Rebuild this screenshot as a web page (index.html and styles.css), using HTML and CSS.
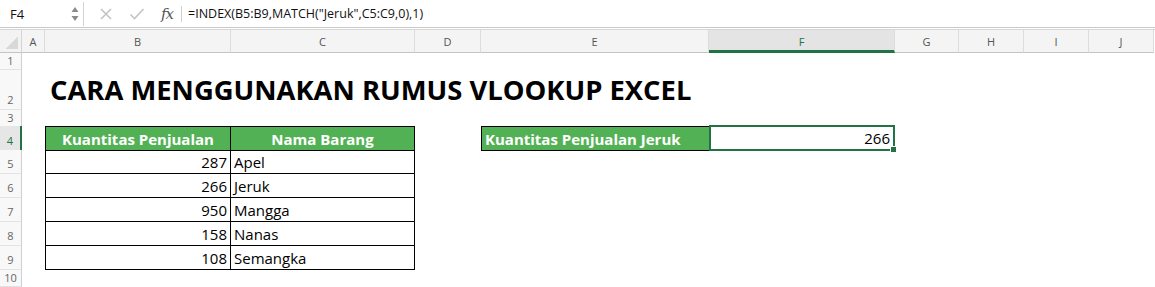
FILE: index.html
```html
<!DOCTYPE html>
<html lang="id">
<head>
    <meta charset="UTF-8">
    <title>Cara Menggunakan Rumus VLOOKUP Excel</title>
    <link rel="stylesheet" href="styles.css">
</head>
<body>
    <div class="formula-bar">
        <div class="name-box">
            <span class="cell-ref">F4</span>
            <span class="spin">
                <svg width="8" height="16" viewBox="0 0 8 16"><path d="M4 1 L7.5 6 H0.5 Z M4 15 L7.5 10 H0.5 Z" fill="#8a8a8a"/></svg>
            </span>
        </div>
        <div class="fb-tools">
            <svg class="tool" width="14" height="14" viewBox="0 0 14 14"><path d="M2 2 L12 12 M12 2 L2 12" stroke="#c4c4c4" stroke-width="1.6" fill="none"/></svg>
            <svg class="tool" width="16" height="14" viewBox="0 0 16 14"><path d="M1.5 7.5 L5.5 11.5 L14.5 2" stroke="#c4c4c4" stroke-width="1.6" fill="none"/></svg>
            <span class="fx">fx</span>
        </div>
        <div class="formula">=INDEX(B5:B9,MATCH("Jeruk",C5:C9,0),1)</div>
    </div>

    <div class="sheet">
        <div class="row head-row">
            <div class="corner"></div>
            <div class="col-h">A</div>
            <div class="col-h">B</div>
            <div class="col-h">C</div>
            <div class="col-h">D</div>
            <div class="col-h">E</div>
            <div class="col-h active">F</div>
            <div class="col-h">G</div>
            <div class="col-h">H</div>
            <div class="col-h">I</div>
            <div class="col-h">J</div>
        </div>

        <div class="row r-small"><div class="rh">1</div></div>
        <div class="row r-title">
            <div class="rh">2</div>
            <div class="title">CARA MENGGUNAKAN RUMUS VLOOKUP EXCEL</div>
        </div>
        <div class="row r-gap"><div class="rh">3</div></div>

        <div class="row r-cell">
            <div class="rh active">4</div>
            <div class="cell col-b th first">Kuantitas Penjualan</div>
            <div class="cell col-c th">Nama Barang</div>
            <div class="cell col-e th label">Kuantitas Penjualan Jeruk</div>
            <div class="cell col-f result">266<span class="fill-handle"></span></div>
        </div>
        <div class="row r-cell">
            <div class="rh">5</div>
            <div class="cell col-b td num">287</div>
            <div class="cell col-c td">Apel</div>
        </div>
        <div class="row r-cell">
            <div class="rh">6</div>
            <div class="cell col-b td num">266</div>
            <div class="cell col-c td">Jeruk</div>
        </div>
        <div class="row r-cell">
            <div class="rh">7</div>
            <div class="cell col-b td num">950</div>
            <div class="cell col-c td">Mangga</div>
        </div>
        <div class="row r-cell">
            <div class="rh">8</div>
            <div class="cell col-b td num">158</div>
            <div class="cell col-c td">Nanas</div>
        </div>
        <div class="row r-cell">
            <div class="rh">9</div>
            <div class="cell col-b td num">108</div>
            <div class="cell col-c td">Semangka</div>
        </div>
        <div class="row r-small"><div class="rh">10</div></div>
    </div>
</body>
</html>
```

FILE: styles.css
```css
body {
    margin: 0;
    padding: 0;
    background: #ffffff;
    font-family: 'Open Sans', sans-serif;
    overflow: hidden;
}

/* formula bar */
.formula-bar {
    display: flex;
    align-items: center;
    height: 28px;
    border-bottom: 1px solid #c9c9c9;
    box-sizing: border-box;
    margin-bottom: 1px;
    box-shadow: 0 1px 0 #ffffff, 0 2px 0 #d6d6d6;
}

.name-box {
    display: flex;
    align-items: center;
    justify-content: space-between;
    width: 84px;
    height: 24px;
    box-sizing: border-box;
    padding: 0 4px 0 10px;
    border-right: 1px solid #d4d4d4;
}

.cell-ref {
    font-size: 13px;
    color: #111;
}

.spin {
    display: flex;
}

.fb-tools {
    display: flex;
    align-items: center;
    gap: 16px;
    padding-left: 15px;
    height: 16px;
}

.fx {
    font-family: 'DejaVu Serif', serif;
    font-style: italic;
    font-size: 15px;
    color: #555;
    padding-right: 8px;
    border-right: 1px solid #d0d0d0;
    line-height: 16px;
    letter-spacing: -1px;
}

.formula {
    padding-left: 6px;
    font-size: 12.5px;
    color: #111;
}

/* sheet grid */
.sheet {
    display: flex;
    flex-direction: column;
    margin-top: 2px;
}

.row {
    display: grid;
    grid-template-columns: 22px 23px 186px 184px 66px 228px 186px 64px 65px 65px 65px;
}

.head-row {
    height: 23px;
}

.corner {
    background: #f3f3f3 linear-gradient(135deg, transparent 55%, #d8d8d8 55%) no-repeat;
    background-size: 14px 14px;
    background-position: right 3px bottom 3px;
    border-right: 1px solid #d4d4d4;
    border-bottom: 1px solid #c4c4c4;
}

.col-h {
    display: flex;
    align-items: center;
    justify-content: center;
    background: #f4f4f4;
    border-right: 1px solid #dcdcdc;
    border-bottom: 1px solid #c4c4c4;
    font-size: 11px;
    color: #555;
}

.col-h.active {
    background: #e4e4e4;
    color: #217346;
    border-bottom: 3px solid #217346;
    padding-top: 2px;
}

.rh {
    display: flex;
    align-items: flex-end;
    justify-content: center;
    padding-bottom: 2px;
    box-sizing: border-box;
    background: #f8f8f8;
    border-right: 1px solid #cfcfcf;
    border-bottom: 1px solid #e2e2e2;
    font-size: 11px;
    color: #666;
}

.rh.active {
    background: #e6e6e6;
    color: #217346;
    border-right: 2px solid #217346;
}

.r-small { height: 17px; }
.r-title { height: 40px; }
.r-gap { height: 16px; }
.r-cell { height: 24px; }

.r-small .rh { padding-bottom: 1px; }

.title {
    grid-column: 3 / -1;
    align-self: end;
    padding: 0 0 3px 5px;
    font-size: 27.4px;
    font-weight: 700;
    color: #000;
    line-height: 34px;
    white-space: nowrap;
}

/* table cells */
.cell {
    display: flex;
    align-items: center;
    box-sizing: border-box;
    font-size: 15px;
    color: #000;
    white-space: nowrap;
}

.col-b { grid-column: 3; }
.col-c { grid-column: 4; }
.col-e { grid-column: 6; }
.col-f { grid-column: 7; }

.th {
    justify-content: center;
    background: #53b155;
    color: #ffffff;
    font-weight: 700;
    border-top: 1px solid #000;
    border-right: 1px solid #000;
    border-bottom: 1px solid #000;
}

.td {
    padding: 0 3px;
    border-right: 1px solid #000;
    border-bottom: 1px solid #000;
}

.first,
.td.num {
    border-left: 1px solid #000;
}

.num {
    justify-content: flex-end;
}

.th.label {
    justify-content: flex-start;
    padding-left: 3px;
    border-left: 1px solid #000;
    border-right: none;
}

.result {
    position: relative;
    justify-content: flex-end;
    padding-right: 3px;
    margin-top: -1px;
    height: 26px;
    border: 2px solid #217346;
}

.fill-handle {
    position: absolute;
    right: -4px;
    bottom: -4px;
    width: 5px;
    height: 5px;
    background: #217346;
    border: 1px solid #ffffff;
}
```
